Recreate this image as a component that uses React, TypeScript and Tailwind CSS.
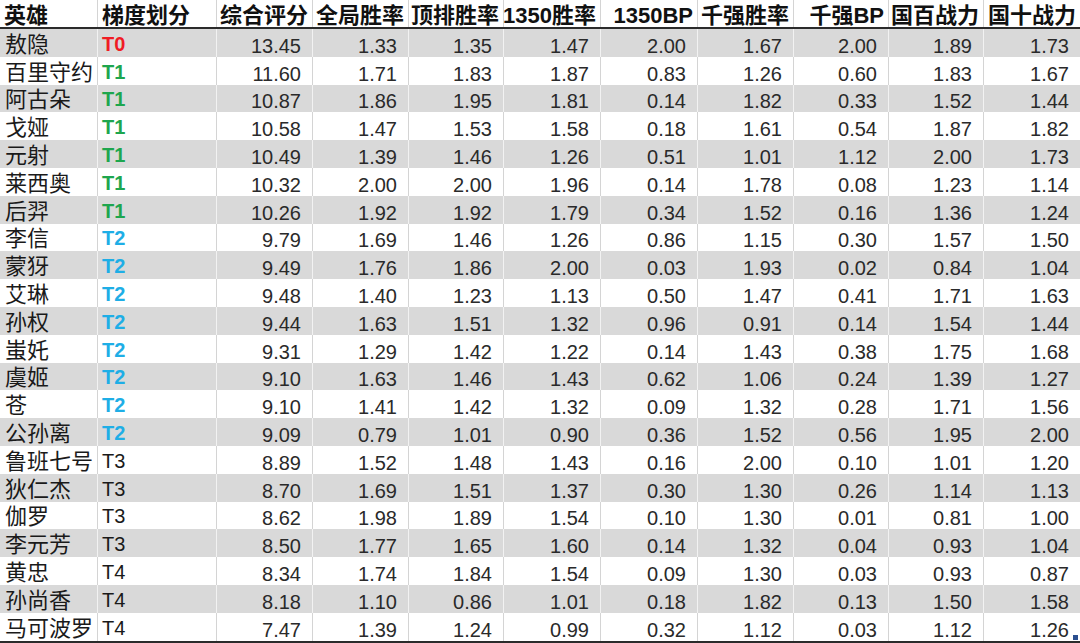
import React from "react";

type Row = [string, string, string[]];

const rows: Row[] = [
  ["敖隐", "T0", ["13.45", "1.33", "1.35", "1.47", "2.00", "1.67", "2.00", "1.89", "1.73"]],
  ["百里守约", "T1", ["11.60", "1.71", "1.83", "1.87", "0.83", "1.26", "0.60", "1.83", "1.67"]],
  ["阿古朵", "T1", ["10.87", "1.86", "1.95", "1.81", "0.14", "1.82", "0.33", "1.52", "1.44"]],
  ["戈娅", "T1", ["10.58", "1.47", "1.53", "1.58", "0.18", "1.61", "0.54", "1.87", "1.82"]],
  ["元射", "T1", ["10.49", "1.39", "1.46", "1.26", "0.51", "1.01", "1.12", "2.00", "1.73"]],
  ["莱西奥", "T1", ["10.32", "2.00", "2.00", "1.96", "0.14", "1.78", "0.08", "1.23", "1.14"]],
  ["后羿", "T1", ["10.26", "1.92", "1.92", "1.79", "0.34", "1.52", "0.16", "1.36", "1.24"]],
  ["李信", "T2", ["9.79", "1.69", "1.46", "1.26", "0.86", "1.15", "0.30", "1.57", "1.50"]],
  ["蒙犽", "T2", ["9.49", "1.76", "1.86", "2.00", "0.03", "1.93", "0.02", "0.84", "1.04"]],
  ["艾琳", "T2", ["9.48", "1.40", "1.23", "1.13", "0.50", "1.47", "0.41", "1.71", "1.63"]],
  ["孙权", "T2", ["9.44", "1.63", "1.51", "1.32", "0.96", "0.91", "0.14", "1.54", "1.44"]],
  ["蚩奼", "T2", ["9.31", "1.29", "1.42", "1.22", "0.14", "1.43", "0.38", "1.75", "1.68"]],
  ["虞姬", "T2", ["9.10", "1.63", "1.46", "1.43", "0.62", "1.06", "0.24", "1.39", "1.27"]],
  ["苍", "T2", ["9.10", "1.41", "1.42", "1.32", "0.09", "1.32", "0.28", "1.71", "1.56"]],
  ["公孙离", "T2", ["9.09", "0.79", "1.01", "0.90", "0.36", "1.52", "0.56", "1.95", "2.00"]],
  ["鲁班七号", "T3", ["8.89", "1.52", "1.48", "1.43", "0.16", "2.00", "0.10", "1.01", "1.20"]],
  ["狄仁杰", "T3", ["8.70", "1.69", "1.51", "1.37", "0.30", "1.30", "0.26", "1.14", "1.13"]],
  ["伽罗", "T3", ["8.62", "1.98", "1.89", "1.54", "0.10", "1.30", "0.01", "0.81", "1.00"]],
  ["李元芳", "T3", ["8.50", "1.77", "1.65", "1.60", "0.14", "1.32", "0.04", "0.93", "1.04"]],
  ["黄忠", "T4", ["8.34", "1.74", "1.84", "1.54", "0.09", "1.30", "0.03", "0.93", "0.87"]],
  ["孙尚香", "T4", ["8.18", "1.10", "0.86", "1.01", "0.18", "1.82", "0.13", "1.50", "1.58"]],
  ["马可波罗", "T4", ["7.47", "1.39", "1.24", "0.99", "0.32", "1.12", "0.03", "1.12", "1.26"]],
];

const headers = ["英雄", "梯度划分", "综合评分", "全局胜率", "顶排胜率", "1350胜率", "1350BP", "千强胜率", "千强BP", "国百战力", "国十战力"];

const GRID = "grid grid-cols-[98px_119px_96px_96px_95px_97px_97px_96px_95px_95px_96px]";

function tierClass(t: string) {
  if (t === "T0") return "font-bold text-[#f01c24]";
  if (t === "T1") return "font-bold text-[#1ea64e]";
  if (t === "T2") return "font-bold text-[#1eaee6]";
  return "font-normal text-[#1a1a1a]";
}

export default function App() {
  return (
    <div className="relative w-[1080px] h-[643px] overflow-hidden bg-white font-['Liberation_Sans','Noto_Sans_CJK_SC',sans-serif]">
      <div className={`${GRID} h-[29px] border-b-2 border-[#2b2b2b] bg-white`}>
        {headers.map((h, i) => (
          <div
            key={h}
            className={`flex items-start pt-[5px] whitespace-nowrap text-[22px] leading-[22px] font-bold text-[#111] border-r border-[#d4d4d4] ${
              i < 2 ? "justify-start pl-[4px]" : "justify-end pr-[4px]"
            } ${i === 10 ? "border-r-0" : ""}`}
          >
            {h}
          </div>
        ))}
      </div>
      {rows.map(([name, tier, vals], r) => {
        const gray = r % 2 === 0;
        const line = gray ? "border-[#f2f2f2]" : "border-[#d4d4d4]";
        const last = r === rows.length - 1;
        return (
          <div
            key={name + r}
            className={`${GRID} h-[27.8px] ${gray ? "bg-[#d9d9d9]" : "bg-white"} ${last ? "box-content border-b-2 border-[#2b2b2b]" : ""}`}
          >
            <div className={`flex items-end pb-[1px] pl-[5px] whitespace-nowrap text-[22px] leading-[22px] text-[#1a1a1a] border-r ${line}`}>
              {name}
            </div>
            <div className={`flex items-end pb-[3px] pl-[4px] text-[20px] leading-[20px] border-r ${line} ${tierClass(tier)}`}>
              {tier}
            </div>
            {vals.map((v, i) => (
              <div
                key={i}
                className={`flex items-end justify-end pb-[1px] pr-[11px] text-[20px] leading-[20px] text-[#2a2a2a] ${
                  i === vals.length - 1 ? "" : `border-r ${line}`
                }`}
              >
                {v}
              </div>
            ))}
          </div>
        );
      })}
      <div className="absolute right-[2px] bottom-[3px] h-[5px] w-[5px] bg-[#2b4f8f]" />
    </div>
  );
}
